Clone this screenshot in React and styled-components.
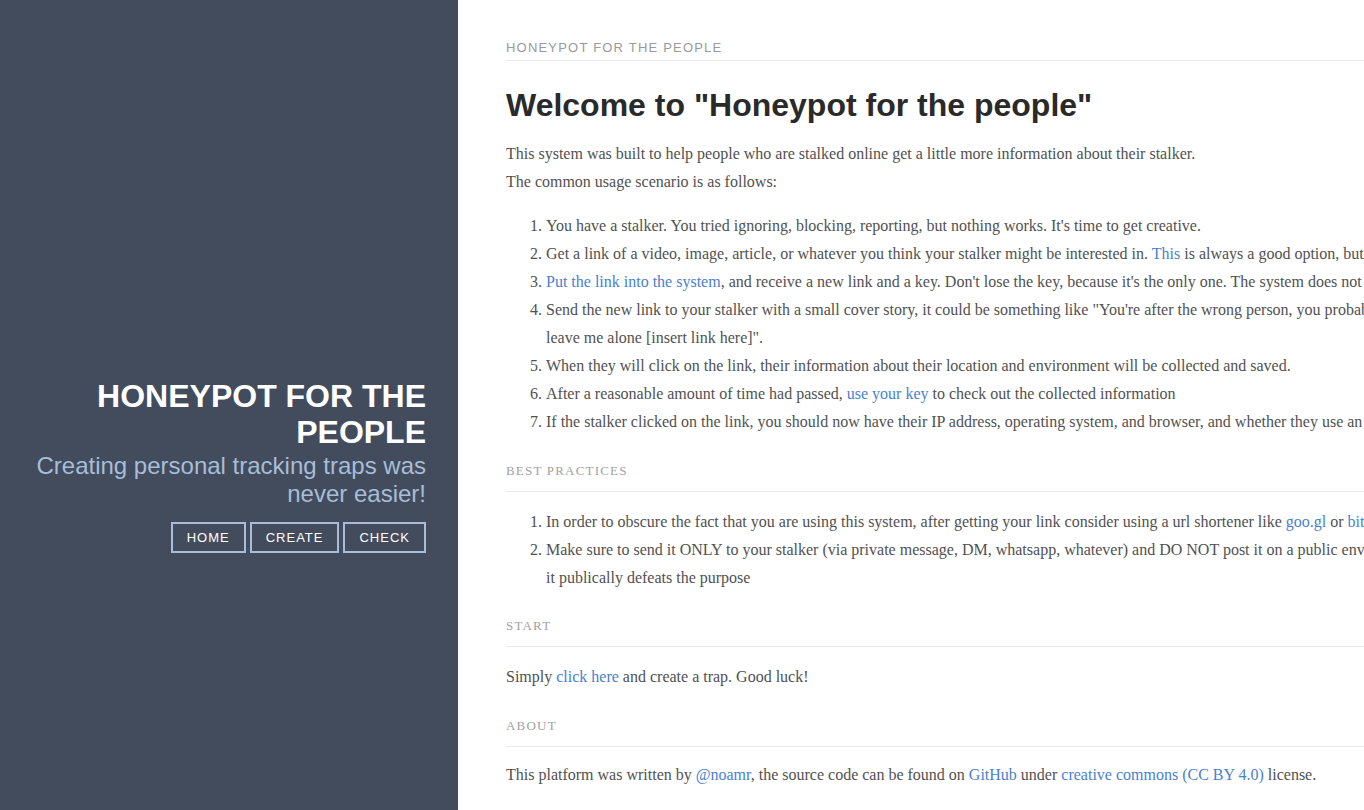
import React from "react";
import styled, { createGlobalStyle } from "styled-components";

const Global = createGlobalStyle`
  html, body { margin: 0; padding: 0; }
  body {
    overflow: hidden;
    background: #fff;
    font-family: "Liberation Serif", "Times New Roman", serif;
    font-size: 16px;
    color: #515151;
  }
`;

const Page = styled.div`
  display: flex;
  min-height: 100vh;
  width: 100%;
  overflow: hidden;
`;

const Sidebar = styled.aside`
  flex: none;
  width: 458px;
  min-height: 100vh;
  background: #424c5d;
  box-sizing: border-box;
  padding: 120px 32px 0 32px;
  display: flex;
  flex-direction: column;
  justify-content: center;
  align-items: flex-end;
  text-align: right;
  font-family: "Liberation Sans", Arial, sans-serif;
`;

const SideTitle = styled.h1`
  margin: 0 0 2px;
  color: #fff;
  font-size: 32px;
  line-height: 36px;
  font-weight: 700;
`;

const SideLead = styled.p`
  margin: 0 0 14px;
  color: #a7bdd8;
  font-size: 24px;
  line-height: 28px;
  font-weight: 400;
`;

const Nav = styled.nav`
  display: flex;
  gap: 4px;
  justify-content: flex-end;
`;

const NavButton = styled.a`
  display: inline-flex;
  align-items: center;
  justify-content: center;
  height: 31px;
  box-sizing: border-box;
  padding: 0 ${(p) => p.$pad}px;
  border: 2px solid #a7bdd8;
  color: #fff;
  font-size: 13px;
  letter-spacing: 1px;
  text-decoration: none;
  text-transform: uppercase;
`;

const Main = styled.main`
  flex: none;
  width: 1500px;
  box-sizing: border-box;
  padding: 41px 0 20px 48px;
`;

const Masthead = styled.div`
  font-family: "Liberation Sans", Arial, sans-serif;
  font-size: 13px;
  line-height: 14px;
  letter-spacing: 1.2px;
  color: #9a9a9a;
  text-transform: uppercase;
  padding-bottom: 5px;
  border-bottom: 1px solid #ebebeb;
`;

const Title = styled.h2`
  font-family: "Liberation Sans", Arial, sans-serif;
  font-size: 32px;
  line-height: 40px;
  font-weight: 700;
  color: #2a2a2a;
  margin: 24px 0 15px;
`;

const Para = styled.p`
  margin: 0;
  line-height: 28px;
`;

const List = styled.ol`
  margin: 16px 0 0;
  padding-left: 40px;
  line-height: 28px;
`;

const SectionHead = styled.h3`
  margin: ${(p) => p.$top}px 0 0;
  padding-bottom: 12px;
  border-bottom: 1px solid #ebebeb;
  font-size: 13px;
  line-height: 16px;
  font-weight: 400;
  letter-spacing: 1.2px;
  color: #a2a2a2;
  text-transform: uppercase;
`;

const SectionPara = styled.p`
  margin: ${(p) => p.$top}px 0 0;
  line-height: 28px;
`;

const Link = styled.a`
  color: #4a80d0;
  text-decoration: none;
`;

export default function App() {
  return (
    <>
      <Global />
      <Page>
        <Sidebar>
          <SideTitle>
            HONEYPOT FOR THE
            <br />
            PEOPLE
          </SideTitle>
          <SideLead>
            Creating personal tracking traps was
            <br />
            never easier!
          </SideLead>
          <Nav>
            <NavButton href="#" $pad={14}>Home</NavButton>
            <NavButton href="#" $pad={14}>Create</NavButton>
            <NavButton href="#" $pad={14}>Check</NavButton>
          </Nav>
        </Sidebar>
        <Main>
          <Masthead>Honeypot for the people</Masthead>
          <Title>Welcome to "Honeypot for the people"</Title>
          <Para>
            This system was built to help people who are stalked online get a little more information about their stalker.
          </Para>
          <Para>The common usage scenario is as follows:</Para>
          <List>
            <li>You have a stalker. You tried ignoring, blocking, reporting, but nothing works. It's time to get creative.</li>
            <li>
              Get a link of a video, image, article, or whatever you think your stalker might be interested in.{" "}
              <Link href="#">This</Link> is always a good option, but anything will do.
            </li>
            <li>
              <Link href="#">Put the link into the system</Link>, and receive a new link and a key. Don't lose the key, because it's the only one. The system does not keep it.
            </li>
            <li>
              Send the new link to your stalker with a small cover story, it could be something like "You're after the wrong person, you probably mean him,
              <br />
              leave me alone [insert link here]".
            </li>
            <li>When they will click on the link, their information about their location and environment will be collected and saved.</li>
            <li>
              After a reasonable amount of time had passed, <Link href="#">use your key</Link> to check out the collected information
            </li>
            <li>If the stalker clicked on the link, you should now have their IP address, operating system, and browser, and whether they use an ad blocker.</li>
          </List>

          <SectionHead $top={27}>Best practices</SectionHead>
          <List>
            <li>
              In order to obscure the fact that you are using this system, after getting your link consider using a url shortener like{" "}
              <Link href="#">goo.gl</Link> or <Link href="#">bit.ly</Link>
            </li>
            <li>
              Make sure to send it ONLY to your stalker (via private message, DM, whatsapp, whatever) and DO NOT post it on a public environment, posting
              <br />
              it publically defeats the purpose
            </li>
          </List>

          <SectionHead $top={26}>Start</SectionHead>
          <SectionPara $top={16}>
            Simply <Link href="#">click here</Link> and create a trap. Good luck!
          </SectionPara>

          <SectionHead $top={27}>About</SectionHead>
          <SectionPara $top={14}>
            This platform was written by <Link href="#">@noamr</Link>, the source code can be found on <Link href="#">GitHub</Link> under{" "}
            <Link href="#">creative commons (CC BY 4.0)</Link> license.
          </SectionPara>
        </Main>
      </Page>
    </>
  );
}
